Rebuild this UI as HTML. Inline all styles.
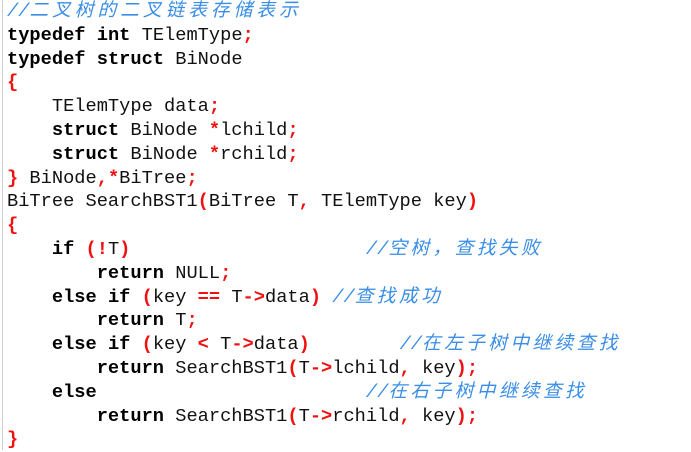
<!DOCTYPE html>
<html><head><meta charset="utf-8"><style>
html,body{margin:0;padding:0;background:#fff;width:691px;height:450px;overflow:hidden}
.l{position:absolute;left:2px;top:0;width:1px;height:450px;background:#d0d0d0}
pre{margin:0;position:absolute;left:7px;top:0;font-family:"Liberation Mono","Noto Sans CJK SC",monospace;font-size:18.7px;line-height:23.8px;color:#111}
b{font-weight:bold;color:#000}
.r{color:#f01010;font-weight:bold}
.c{color:#3a8ee6;font-style:italic}
.c span{letter-spacing:3.4px}
</style></head><body><div class="l"></div>
<pre><span class="c">//<span style="letter-spacing:4px">二叉树的二叉链表存储表示</span></span>
<b>typedef</b> <b>int</b> TElemType<span class="r">;</span>
<b>typedef</b> <b>struct</b> BiNode
<span class="r">{</span>
    TElemType data<span class="r">;</span>
    <b>struct</b> BiNode <span class="r">*</span>lchild<span class="r">;</span>
    <b>struct</b> BiNode <span class="r">*</span>rchild<span class="r">;</span>
<span class="r">}</span> BiNode<span class="r">,*</span>BiTree<span class="r">;</span>
BiTree SearchBST1<span class="r">(</span>BiTree T<span class="r">,</span> TElemType key<span class="r">)</span>
<span class="r">{</span>
    <b>if</b> <span class="r">(!</span>T<span class="r">)</span>                     <span class="c">//<span>空树，查找失败</span></span>
        <b>return</b> NULL<span class="r">;</span>
    <b>else</b> <b>if</b> <span class="r">(</span>key <span class="r">==</span> T<span class="r">-&gt;</span>data<span class="r">)</span> <span class="c">//<span>查找成功</span></span>
        <b>return</b> T<span class="r">;</span>
    <b>else</b> <b>if</b> <span class="r">(</span>key <span class="r">&lt;</span> T<span class="r">-&gt;</span>data<span class="r">)</span>        <span class="c">//<span>在左子树中继续查找</span></span>
        <b>return</b> SearchBST1<span class="r">(</span>T<span class="r">-&gt;</span>lchild<span class="r">,</span> key<span class="r">);</span>
    <b>else</b>                        <span class="c">//<span>在右子树中继续查找</span></span>
        <b>return</b> SearchBST1<span class="r">(</span>T<span class="r">-&gt;</span>rchild<span class="r">,</span> key<span class="r">);</span>
<span class="r">}</span></pre>
</body></html>
